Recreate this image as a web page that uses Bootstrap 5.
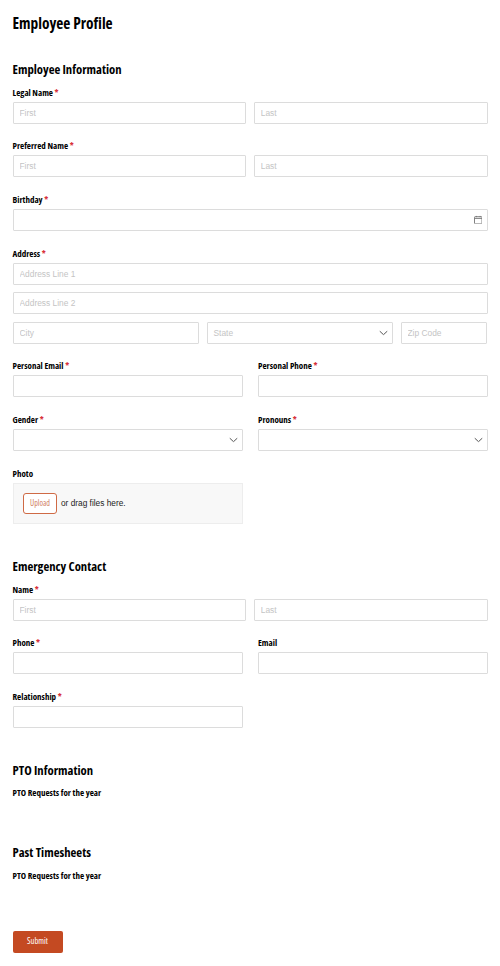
<!doctype html>
<html lang="en">
<head>
<meta charset="utf-8">
<title>Employee Profile</title>
<link href="https://cdn.jsdelivr.net/npm/bootstrap@5.3.0/dist/css/bootstrap.min.css" rel="stylesheet">
<style>
html,body{background:#fff;}
body{font-family:"Liberation Sans",Arial,sans-serif;color:#000;}
.sheet{padding:14px 12.5px 13px;width:500px;}
.pagetitle,.sectitle,.flabel,.subnote,.subbtn,.upbtn{font-family:"Open Sans",sans-serif;font-stretch:75%;}
.pagetitle{font-size:15.4px;font-weight:700;line-height:20px;margin:0 0 25px;height:20px;}
.sectitle{font-size:12.7px;font-weight:700;line-height:20px;margin:0 0 5.5px;}
.flabel{display:block;font-size:9px;font-weight:700;line-height:15px;margin:0 0 2px;height:15px;}
.flabel i{color:#d8323c;font-style:normal;}
.field{margin-bottom:14.7px;}
.tinput{display:block;width:100%;height:22px;border:1px solid #dcdcdc;border-radius:1px;background:#fff;padding:0 6px;font-size:8.4px;color:#c4c4c4;line-height:20px;}
.tinput::placeholder{color:#c4c4c4;opacity:1;}
.tinput.stack{margin-bottom:7.5px;}
.selwrap,.datewrap{position:relative;}
.selwrap svg,.datewrap svg{position:absolute;top:50%;transform:translateY(-50%);}
.selwrap svg{right:5px;}
.datewrap svg{right:5.500px;}
.gap8{column-gap:7.5px;}
.gap15{column-gap:15px;}
.half{width:230.5px;flex:none;}
.grow{flex:1 1 0;min-width:0;}
.citybox{width:186.5px;flex:none;}
.zipbox{width:86.5px;flex:none;}
.dropzone{width:230.5px;height:41.5px;background:#f8f8f8;border:1px solid #ededed;padding:0 9.5px;font-size:8.3px;color:#222;}
.upbtn{width:34px;height:20.5px;border:1px solid #cf6a45;border-radius:3px;background:#fff;color:#cf7d5e;font-size:8px;padding:0;line-height:18px;text-align:center;margin-right:4px;}
.secgap{margin-top:32px;}
.subnote{font-size:9px;font-weight:700;line-height:14px;margin:0;}
.pto{margin-top:32px;}
.pto .sectitle{margin-bottom:6px;}
.past{margin-top:42px;}
.past .sectitle{margin-bottom:7px;}
.subbtn{display:block;width:50px;height:22px;border:0;border-radius:2px;background:#c44a22;color:#fff;font-size:8.500px;padding:0;margin-top:47.500px;}
</style>
</head>
<body>
<form class="sheet" onsubmit="return false">
  <h1 class="pagetitle">Employee Profile</h1>

  <h2 class="sectitle">Employee Information</h2>
  <div class="field">
    <label class="flabel">Legal Name <i>*</i></label>
    <div class="d-flex gap8"><input class="tinput grow" placeholder="First"><input class="tinput grow" placeholder="Last"></div>
  </div>
  <div class="field">
    <label class="flabel">Preferred Name <i>*</i></label>
    <div class="d-flex gap8"><input class="tinput grow" placeholder="First"><input class="tinput grow" placeholder="Last"></div>
  </div>
  <div class="field">
    <label class="flabel">Birthday <i>*</i></label>
    <div class="datewrap"><div class="tinput"></div>
      <svg width="8.500" height="8.500" viewBox="0 0 9 9" fill="none" stroke="#777" stroke-width="1"><rect x=".5" y="1" width="8" height="7.5" rx=".7"/><path d="M.5 2.8h8M2.5 0v1.5M6.5 0v1.5"/></svg>
    </div>
  </div>
  <div class="field">
    <label class="flabel">Address <i>*</i></label>
    <input class="tinput stack" placeholder="Address Line 1">
    <input class="tinput stack" placeholder="Address Line 2">
    <div class="d-flex gap8">
      <input class="tinput citybox" placeholder="City">
      <div class="selwrap citybox"><div class="tinput">State</div>
        <svg width="9" height="5" viewBox="0 0 9 5" fill="none" stroke="#555" stroke-width="1"><path d="M.7.6l3.800 3.600L8.300.6"/></svg>
      </div>
      <input class="tinput zipbox grow" placeholder="Zip Code">
    </div>
  </div>
  <div class="field d-flex gap15">
    <div class="half"><label class="flabel">Personal Email <i>*</i></label><input class="tinput"></div>
    <div class="grow"><label class="flabel">Personal Phone <i>*</i></label><input class="tinput"></div>
  </div>
  <div class="field d-flex gap15">
    <div class="half"><label class="flabel">Gender <i>*</i></label>
      <div class="selwrap"><div class="tinput"></div><svg width="9" height="5" viewBox="0 0 9 5" fill="none" stroke="#555" stroke-width="1"><path d="M.7.6l3.800 3.600L8.300.6"/></svg></div>
    </div>
    <div class="grow"><label class="flabel">Pronouns <i>*</i></label>
      <div class="selwrap"><div class="tinput"></div><svg width="9" height="5" viewBox="0 0 9 5" fill="none" stroke="#555" stroke-width="1"><path d="M.7.6l3.800 3.600L8.300.6"/></svg></div>
    </div>
  </div>
  <div class="field">
    <label class="flabel">Photo</label>
    <div class="dropzone d-flex align-items-center"><button type="button" class="upbtn">Upload</button>or drag files here.</div>
  </div>

  <div class="secgap">
    <h2 class="sectitle">Emergency Contact</h2>
    <div class="field">
      <label class="flabel">Name <i>*</i></label>
      <div class="d-flex gap8"><input class="tinput grow" placeholder="First"><input class="tinput grow" placeholder="Last"></div>
    </div>
    <div class="field d-flex gap15">
      <div class="half"><label class="flabel">Phone <i>*</i></label><input class="tinput"></div>
      <div class="grow"><label class="flabel">Email</label><input class="tinput"></div>
    </div>
    <div class="field">
      <label class="flabel">Relationship <i>*</i></label>
      <input class="tinput half">
    </div>
  </div>

  <div class="pto">
    <h2 class="sectitle">PTO Information</h2>
    <p class="subnote">PTO Requests for the year</p>
  </div>
  <div class="past">
    <h2 class="sectitle">Past Timesheets</h2>
    <p class="subnote">PTO Requests for the year</p>
  </div>
  <button class="subbtn" type="submit">Submit</button>
</form>
<script src="https://cdn.jsdelivr.net/npm/bootstrap@5.3.0/dist/js/bootstrap.bundle.min.js"></script>
</body>
</html>
